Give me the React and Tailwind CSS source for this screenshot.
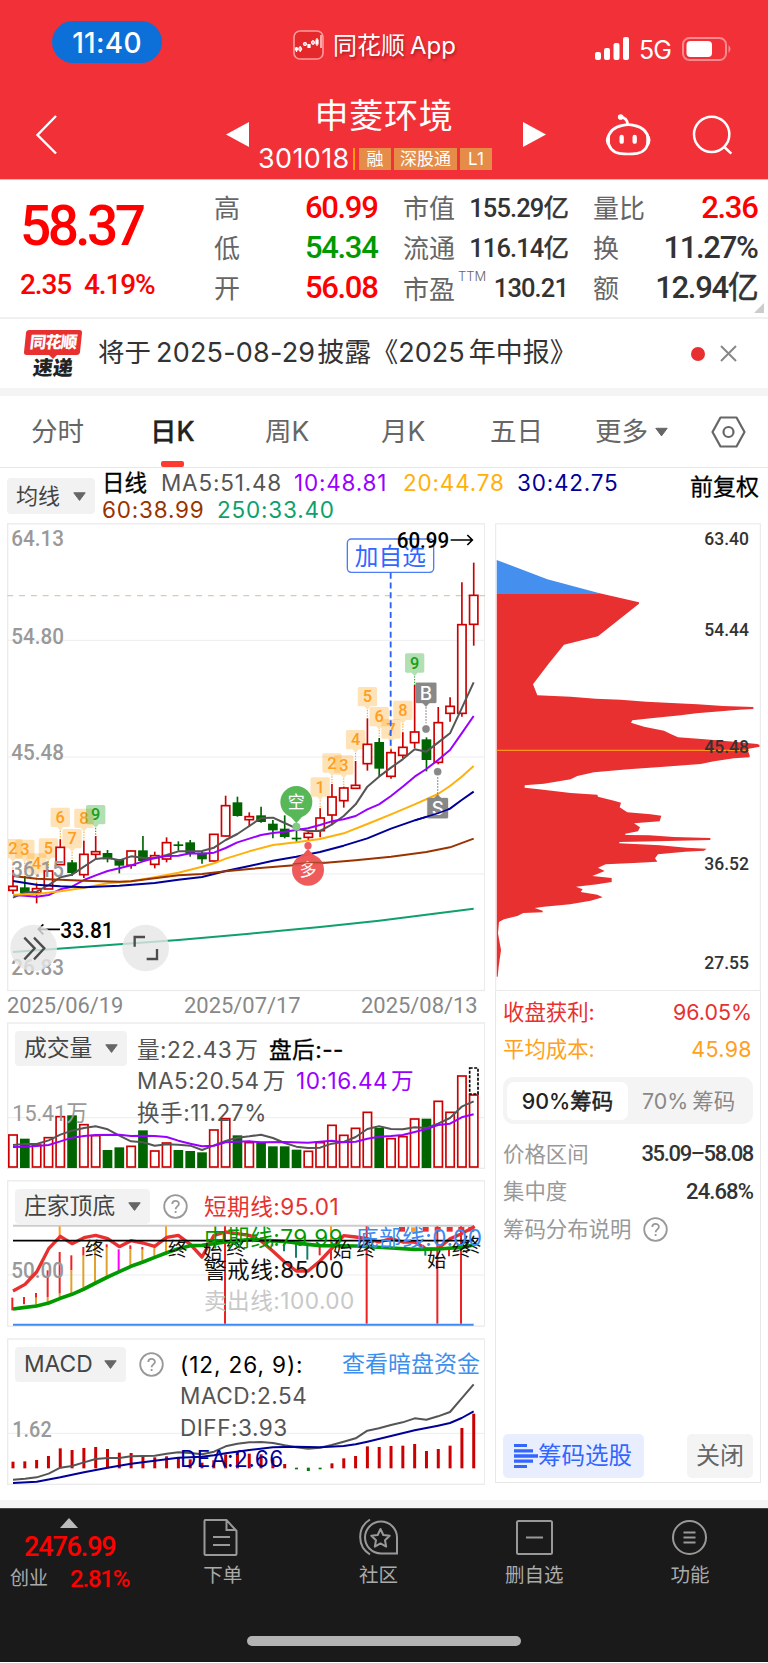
import React from "react";

const STEP = 35.44;
const X = (i) => 39 + STEP * i;
const RED = "#cc0000";
const GREEN = "#006400";

// [high, bodyTop, bodyBottom, low, rising]
const candles = [
  [1050, 1099, 1111, 1122, 1], [1068, 1103, 1118, 1118, 0], [1090, 1106, 1118, 1150, 1], [1053, 1053, 1107, 1107, 1],
  [958, 982, 1034, 1034, 1], [1020, 1028, 1058, 1068, 0], [962, 1003, 1064, 1074, 1], [948, 995, 1003, 1017, 1],
  [990, 1000, 1017, 1027, 0], [1017, 1020, 1036, 1060, 0], [992, 993, 1036, 1046, 1], [948, 992, 1022, 1022, 0],
  [995, 1007, 1033, 1045, 1], [952, 968, 1017, 1027, 1], [964, 974, 977, 992, 0], [960, 968, 999, 1010, 0],
  [995, 999, 1017, 1031, 0], [942, 943, 1023, 1023, 1], [827, 857, 948, 950, 1], [830, 848, 887, 890, 0],
  [877, 890, 899, 921, 1], [860, 887, 905, 908, 0], [900, 912, 930, 955, 0], [886, 927, 950, 955, 0],
  [930, 954, 957, 967, 0], [935, 940, 952, 962, 1], [865, 894, 932, 952, 1], [792, 831, 885, 912, 1],
  [800, 804, 842, 863, 1], [723, 796, 805, 805, 1], [595, 673, 731, 752, 1], [654, 667, 745, 768, 0],
  [688, 698, 769, 776, 1], [637, 682, 706, 715, 1], [495, 636, 668, 685, 1], [652, 659, 719, 754, 0],
  [561, 608, 727, 733, 1], [532, 559, 580, 605, 1], [187, 314, 580, 590, 1], [128, 226, 313, 377, 1],
];

const priceLines = [
  ["#555555", "39,1133 75,1118 110,1115 146,1095 181,1072 216,1064 252,1040 287,1017 323,1013 358,1021 393,1009 429,1013 464,1015 500,1005 535,994 571,994 606,993 642,983 677,960 712,942 748,918 783,894 819,893 854,909 889,925 924,933 960,933 995,914 1031,888 1067,853 1102,800 1137,770 1173,743 1208,718 1244,688 1279,695 1314,668 1350,640 1385,565 1421,487"],
  ["#9900ff", "39,1125 75,1127 110,1130 146,1125 181,1108 216,1100 252,1080 287,1066 323,1053 358,1045 393,1036 429,1024 464,1014 500,1008 535,1007 571,1000 606,1001 642,998 677,984 712,967 748,956 783,945 819,939 854,935 889,930 924,925 960,915 995,904 1031,898 1067,888 1102,868 1137,853 1173,828 1208,800 1244,770 1279,747 1314,720 1350,690 1385,640 1421,588"],
  ["#ffb10a", "39,1124 110,1122 181,1114 252,1103 323,1090 393,1084 464,1072 535,1058 606,1040 642,1030 677,1016 748,994 819,975 889,967 960,957 1031,940 1102,912 1173,883 1244,853 1314,822 1350,798 1385,770 1421,738"],
  ["#000099", "39,1083 110,1094 181,1099 252,1102 358,1097 464,1089 535,1079 606,1071 677,1053 748,1038 819,1022 889,1010 960,996 1031,977 1102,955 1173,926 1244,901 1314,880 1350,866 1385,840 1421,815"],
  ["#993300", "39,1068 110,1076 181,1079 252,1082 358,1085 393,1084 464,1075 535,1066 606,1062 677,1054 748,1047 854,1038 960,1030 1067,1021 1173,1010 1279,996 1350,982 1421,956"],
  ["#0fa06c", "39,1296 358,1273 535,1260 748,1241 960,1221 1137,1202 1314,1180 1421,1166"],
];

// [candle index, label, top of the flag, end of the dotted stem]
const flags = [
  [0, "2", 957, 1050], [1, "3", 959, 1068], [2, "4", 1000, 1090], [3, "5", 955, 1050], [4, "6", 863, 960], [5, "7", 927, 1022],
  [6, "8", 866, 962], [7, "9", 855, 950], [26, "1", 772, 867], [27, "2", 700, 792], [28, "3", 706, 800], [29, "4", 630, 723],
  [30, "5", 501, 595], [31, "6", 561, 654], [32, "7", 598, 688], [33, "8", 542, 637], [34, "9", 400, 495],
];

const volTops = [374, 385, 404, 382, 319, 315, 343, 376, 419, 411, 408, 360, 422, 398, 419, 422, 426, 359, 325, 375, 397, 398, 408, 408, 418, 423, 397, 345, 375, 354, 306, 353, 385, 379, 326, 325, 273, 306, 197, 254];
const volGreen = [1, 5, 8, 9, 11, 14, 15, 16, 19, 21, 22, 23, 24, 31, 35];
const macdTops = [392, 391, 387, 375, 352, 357, 351, 348, 354, 365, 366, 378, 379, 376, 378, 385, 395, 388, 370, 365, 368, 370, 385, 399, 415, 420, 415, 397, 382, 375, 346, 348, 345, 344, 339, 360, 354, 344, 291, 248];

const NUM = "Roboto, 'Noto Sans CJK SC', sans-serif";

function Num({ x, y, w, size = 68, fill = "#999999", weight = 500, children }) {
  return (
    <text x={x} y={y} fontSize={size} fill={fill} fontWeight={weight} fontFamily={NUM} textLength={w} lengthAdjust="spacingAndGlyphs">
      {children}
    </text>
  );
}

function Line({ points, stroke, width = 6 }) {
  return <polyline points={points} fill="none" stroke={stroke} strokeWidth={width} strokeLinejoin="round" />;
}

function Flag({ i, label, top, end }) {
  const x = X(i);
  const green = label === "9";
  const c = green ? "#1a9e1a" : "#ff9d1e";
  return (
    <g>
      <path d={`M${x - 24} ${top}h48q5 0 5 5v48q0 5-5 5h-15l-9 11l-9-11h-15q-5 0-5-5v-48q0-5 5-5z`} fill={green ? "#009900" : "#ff9900"} fillOpacity={green ? 0.3 : 0.28} />
      <line x1={x} x2={x} y1={top + 69} y2={end} stroke={c} strokeWidth="3" strokeDasharray="4 4" />
      <text x={x} y={top + 46} fontSize="49" textAnchor="middle" fill={c} fontWeight="500" fontFamily={NUM}>{label}</text>
    </g>
  );
}

function PriceChart() {
  return (
    <svg className="block h-[499px] w-[478px]" viewBox="21 9 1434 1497">
      <rect x="23" y="11.5" width="1431" height="1400" fill="none" stroke="#ebebeb" strokeWidth="4" />
      {[361, 711, 1062].map((y) => <line key={y} x1="23" x2="1453" y1={y} y2={y} stroke="#ededed" strokeWidth="3" />)}
      <line x1="22" x2="1455" y1="227" y2="227" stroke="#e3c8a4" strokeWidth="4" strokeDasharray="17.7 17.7" />
      <defs><clipPath id="plot"><rect x="24" y="12" width="1431" height="1400" /></clipPath></defs>
      <g clipPath="url(#plot)">
        {flags.map(([i, l, t, e]) => <Flag key={i} i={i} label={l} top={t} end={e} />)}
      </g>
      {candles.map(([h, t, b, l, up], i) => (
        <g key={i}>
          <line x1={X(i)} x2={X(i)} y1={h} y2={up ? t : l} stroke={up ? RED : GREEN} strokeWidth="5" />
          {up ? <line x1={X(i)} x2={X(i)} y1={b} y2={l} stroke={RED} strokeWidth="5" /> : null}
          {up ? (
            <rect x={X(i) - 12.5} y={t} width="25" height={b - t} fill="#fff" stroke={RED} strokeWidth="5" />
          ) : (
            <rect x={X(i) - 14.5} y={t - 1} width="29" height={b - t + 2} fill={GREEN} />
          )}
        </g>
      ))}
      {priceLines.map(([c, p]) => <Line key={c} points={p} stroke={c} />)}
      <Num x="34" y="79" w="158">64.13</Num>
      <Num x="34" y="371" w="158">54.80</Num>
      <Num x="34" y="720" w="158">45.48</Num>
      <Num x="34" y="1070" w="158">36.15</Num>
      <Num x="34" y="1364" w="158">26.83</Num>
      <g>
        <circle cx="889" cy="846" r="48" fill="#58b858" />
        <path d="M872 890h34l-17 20z" fill="#58b858" />
        <circle cx="889" cy="920" r="12" fill="#7fcb7f" />
        <text x="889" y="864" fontSize="51" fill="#fff" textAnchor="middle" fontFamily={NUM}>空</text>
        <circle cx="924" cy="1049" r="48" fill="#ee5454" fillOpacity="0.96" />
        <path d="M907 1006h34l-17-20z" fill="#ee5454" />
        <circle cx="924" cy="977" r="11" fill="#ef5b63" />
        <text x="924" y="1067" fontSize="51" fill="#fff" textAnchor="middle" fontFamily={NUM}>多</text>
        <path d="M878 1032Q924 1026 975 1028" stroke="#a84a2c" strokeWidth="5" fill="none" />
      </g>
      <g stroke="#888888" fill="#888888">
        <line x1="1278" x2="1278" y1="562" y2="610" strokeWidth="4" strokeDasharray="4 5" />
        <circle cx="1278" cy="627" r="11" />
        <circle cx="1313" cy="755" r="11" />
        <line x1="1313" x2="1313" y1="772" y2="822" strokeWidth="4" strokeDasharray="4 5" />
        <rect x="1247" y="488" width="62" height="61" rx="3" />
        <path d="M1268 549h20l-10 11z" />
        <rect x="1282" y="834" width="62" height="61" rx="3" />
        <path d="M1303 834h20l-10-11z" />
      </g>
      <text x="1278" y="539" fontSize="56" fill="#fff" textAnchor="middle" fontWeight="500" fontFamily="Inter, sans-serif">B</text>
      <text x="1313" y="885" fontSize="56" fill="#fff" textAnchor="middle" fontWeight="500" fontFamily="Inter, sans-serif">S</text>
      <polyline points="1244,901 1314,880 1350,866" fill="none" stroke="#000099" strokeWidth="5" />
      <rect x="1042" y="57" width="259" height="100" rx="12" fill="#fff" fillOpacity="0.5" stroke="#4c7df5" strokeWidth="4" />
      <text x="1171" y="135" fontSize="71" fill="#3366ff" textAnchor="middle" fontFamily={NUM}>加自选</text>
      <line x1="1172" x2="1172" y1="158" y2="680" stroke="#2c62f5" strokeWidth="5.5" strokeDasharray="18 11.5" />
      <Num x="1190" y="84" w="158" fill="#000">60.99</Num>
      <path d="M1352 60h64M1402 45l15 15l-15 15" fill="none" stroke="#000" strokeWidth="5" />
      <Num x="181" y="1255" w="160" fill="#000">33.81</Num>
      <path d="M180 1228h-65M130 1213l-15 15l15 15" fill="none" stroke="#000" strokeWidth="5" />
      <circle cx="101" cy="1284" r="70" fill="#e6e6e6" fillOpacity="0.8" />
      <circle cx="437" cy="1284" r="70" fill="#e6e6e6" fillOpacity="0.8" />
      <path d="M73 1253l31 32l-31 33M102 1253l31 32l-31 33M404 1280v-29h31M471 1287v30h-31" fill="none" stroke="#4d4d4d" strokeWidth="7" />
      <Num x="21" y="1480" w="349" weight="400" fill="#888888">2025/06/19</Num>
      <Num x="552" y="1480" w="350" weight="400" fill="#888888">2025/07/17</Num>
      <Num x="1083" y="1480" w="350" weight="400" fill="#888888">2025/08/13</Num>
    </svg>
  );
}

function ChipChart() {
  return (
    <svg className="block h-[468px] w-[266px]" viewBox="33 9 798 1404">
      <path d="M38 120L190 178L347 220H38z" fill="#458fee" />
      <path fill="#e83030" d="M38 220H347L465 247L465 251L342 349L240 374L195 430L147 493L160 526L260 530L335 536L410 539L487 545L562 549L640 553L717 558L808 561V567L765 569L720 573L637 580L590 586L508 594L445 601L441 608L480 620L540 632L560 642L582 652L662 658L750 665L820 672L827 675V680L790 687L797 706V712L750 715L690 724L650 732L540 740L433 748L330 757L280 768L260 778L180 791L122 796V803L165 808L260 819L340 824L342 830L390 842L411 848L407 862L430 877L500 883L532 887L527 904L450 910L468 922L462 934L424 941V945L495 946L570 951L679 954V960L518 964L406 966V970L527 976L608 983L668 986L660 992L603 995L522 1003L513 1015L520 1025L450 1029L365 1033L342 1043L362 1053L325 1068L383 1074V1086L340 1093L276 1100L296 1108L290 1116L340 1124L356 1132L320 1142L258 1153L180 1160L152 1164L176 1172V1177L118 1179L100 1188L60 1198L45 1206L42 1240L51 1290L44 1340L41 1370H38z" />
      <rect x="35" y="11.5" width="794" height="1400" fill="none" stroke="#ebebeb" strokeWidth="3.5" />
      <line x1="38" x2="795" y1="691" y2="691" stroke="#ff9320" strokeWidth="4" />
      {[["63.40", 74], ["54.44", 349], ["45.48", 700], ["36.52", 1050], ["27.55", 1348]].map(([t, y]) => (
        <Num key={t} x="661" y={y} w="134" size="57" fill="#333">{t}</Num>
      ))}
    </svg>
  );
}

function VolumeChart() {
  return (
    <svg className="block h-[147px] w-[478px]" viewBox="21 35 1434 441">
      <rect x="23" y="38" width="1431" height="436" fill="none" stroke="#ebebeb" strokeWidth="4" />
      <line x1="23" x2="1453" y1="322" y2="322" stroke="#ededed" strokeWidth="3" />
      {volTops.map((t, i) => volGreen.includes(i) ? (
        <rect key={i} x={X(i) - 14.5} y={t} width="29" height={473 - t} fill={GREEN} />
      ) : (
        <rect key={i} x={X(i) - 12.5} y={t} width="25" height={470 - t} fill="#fff" stroke={RED} strokeWidth="5" />
      ))}
      <rect x="1409" y="173" width="25" height="78" fill="#fff" stroke="#000" strokeWidth="5" strokeDasharray="9 4.5" />
      <Line stroke="#555555" points="39,404 75,401 110,401 146,390 181,373 216,361 252,353 287,348 323,357 358,376 393,393 429,396 464,406 500,402 535,403 571,406 606,419 642,405 677,392 712,382 748,378 783,373 819,383 854,398 889,409 924,413 960,412 995,400 1031,395 1067,380 1102,356 1137,348 1173,356 1208,357 1244,351 1279,353 1314,340 1350,323 1385,289 1421,273" />
      <Line stroke="#9900ff" points="39,410 75,409 110,407 146,404 181,393 216,382 252,377 287,374 358,373 393,377 429,376 464,377 500,380 535,391 571,400 606,408 642,406 677,396 748,393 783,396 854,395 924,397 960,394 995,391 1031,396 1067,394 1102,385 1137,379 1173,377 1208,374 1244,365 1279,356 1314,344 1350,340 1385,321 1421,312" />
      <Num x="37" y="331" w="226" size="68" weight="400" fill="#999">15.41万</Num>
    </svg>
  );
}

const stems = [
  ["#e22", 37, 382, 420], ["#e22", 72, 380, 402], ["#e22", 108, 368, 382], ["#dfa32d", 108, 382, 405], ["#e22", 143, 300, 380], ["#dfa32d", 143, 380, 396],
  ["#e22", 179, 245, 370], ["#dfa32d", 179, 370, 382], ["#e22", 214, 255, 300], ["#dfa32d", 214, 300, 370], ["#e22", 250, 230, 256], ["#dfa32d", 250, 256, 352],
  ["#dfa32d", 285, 218, 337], ["#e22", 320, 222, 232], ["#dfa32d", 320, 232, 316], ["#f0f", 356, 237, 303], ["#e22", 391, 225, 237], ["#dfa32d", 391, 237, 288],
  ["#e22", 427, 230, 238], ["#dfa32d", 427, 238, 275], ["#dfa32d", 463, 232, 260], ["#ff9d1e", 179, 168, 198], ["#ff9d1e", 498, 168, 245], ["#ff9d1e", 993, 168, 225],
  ["#17806a", 817, 213, 228], ["#17806a", 852, 220, 243], ["#17806a", 888, 220, 262], ["#17806a", 922, 220, 268], ["#17806a", 1276, 235, 256], ["#e22", 959, 228, 255], ["#e22", 993, 232, 270], ["#e22", 1347, 232, 258],
  ["#e22", 675, 168, 460], ["#e22", 1100, 168, 460], ["#e22", 1312, 168, 460], ["#e22", 1383, 168, 460],
];

function TopBottomChart() {
  return (
    <svg className="block h-[147px] w-[478px]" viewBox="21 29 1434 441">
      <rect x="23" y="31.5" width="1431" height="436" fill="none" stroke="#ebebeb" strokeWidth="4" />
      <line x1="23" x2="1453" y1="314" y2="314" stroke="#ededed" strokeWidth="3" />
      <line x1="39" x2="1421" y1="166" y2="166" stroke="#cccccc" strokeWidth="6" />
      {stems.map(([c, x, a, b], i) => <line key={i} x1={x} x2={x} y1={a} y2={b} stroke={c} strokeWidth="6" />)}
      <Num x="34" y="324" w="158">50.00</Num>
      {[1197, 1268, 1304, 1340, 1375, 1405].map((x) => <rect key={x} x={x} y="170" width="18" height="14" fill="#e83030" />)}
      <line x1="1233" x2="1252" y1="178" y2="178" stroke="#ff9d1e" strokeWidth="14" />
      <Line stroke="#e83030" width={10} points="39,362 75,342 110,305 146,235 181,198 216,220 252,202 287,195 323,205 358,229 393,211 429,218 464,228 500,201 535,195 571,222 606,260 642,195 677,185 712,190 748,195 783,212 819,243 854,275 889,302 924,302 960,272 995,235 1031,196 1067,200 1102,205 1137,215 1173,205 1208,215 1244,215 1279,236 1314,235 1350,205 1385,190 1424,168" />
      <Line stroke="#009a00" width={11} points="39,416 75,411 110,407 146,398 181,384 216,372 252,356 287,338 323,320 358,304 393,288 429,275 464,261 500,247 535,235 571,226 606,225 677,215 748,208 854,213 924,222 960,226 1067,227 1173,233 1244,237 1314,236 1385,231 1421,224" />
      <line x1="39" x2="1421" y1="211" y2="211" stroke="#000" strokeWidth="5" />
      <line x1="39" x2="1421" y1="463" y2="463" stroke="#3d8bf0" strokeWidth="6" />
      {[["终", 284, 258], ["终", 533, 258], ["始", 638, 266], ["终", 708, 255], ["始", 1027, 259], ["终", 1098, 258], ["始", 1310, 289], ["终", 1384, 258], ["终", 1414, 245]].map(([t, x, y]) => (
        <text key={x} x={x} y={y} fontSize="58" fill="#111" textAnchor="middle" fontFamily={NUM}>{t}</text>
      ))}
    </svg>
  );
}

function MacdChart() {
  return (
    <svg className="block h-[147px] w-[478px]" viewBox="21 21 1434 441">
      <rect x="23" y="24" width="1431" height="436" fill="none" stroke="#ebebeb" strokeWidth="4" />
      <line x1="23" x2="1453" y1="307" y2="307" stroke="#ededed" strokeWidth="3" />
      <Num x="37" y="317" w="118">1.62</Num>
      {macdTops.map((t, i) => (
        <line key={i} x1={X(i)} x2={X(i)} y1={t > 412 ? 410 : 412} y2={t} stroke={t > 412 ? "#087808" : RED} strokeWidth="9" />
      ))}
      <Line stroke="#555555" points="39,446 75,443 110,439 146,428 181,410 216,405 252,394 287,384 323,381 358,381 393,376 464,374 500,368 535,364 571,366 606,370 642,362 677,346 712,338 748,334 783,333 819,336 854,343 889,349 924,353 960,350 995,342 1031,332 1067,322 1102,299 1137,292 1173,282 1208,274 1244,262 1279,266 1314,256 1350,243 1385,202 1421,160" />
      <Line stroke="#000099" width={6} points="39,456 110,452 181,439 252,424 323,410 393,398 464,389 535,380 606,377 642,373 677,367 748,357 819,349 889,347 960,349 1031,345 1067,340 1102,332 1173,315 1244,298 1314,284 1350,276 1385,261 1421,241" />
    </svg>
  );
}

function Caret({ className = "" }) {
  return (
    <svg className={"h-[9px] w-[13px] shrink-0 " + className} viewBox="0 0 13 9">
      <path d="M.8.8h11.4L6.5 8.4z" fill="#666" stroke="#666" strokeLinejoin="round" />
    </svg>
  );
}

function Picker({ className, children }) {
  return (
    <button className={"flex h-[35px] shrink-0 items-center justify-between rounded-[4px] bg-[#f2f2f2] pr-[9px] pl-[9px] text-[22.8px] text-[#444] " + className}>
      <span className="flex">{children}</span>
      <Caret />
    </button>
  );
}

function Help() {
  return (
    <svg className="size-[25px] shrink-0" viewBox="0 0 25 25" fill="none" stroke="#999" strokeWidth="1.8">
      <circle cx="12.5" cy="12.5" r="11.3" />
      <path d="M9.3 10.1c0-4.3 6.6-4.2 6.6-.2 0 2.3-3.3 2.6-3.3 5.3M12.6 17v2" />
    </svg>
  );
}

function Logo() {
  return (
    <div className="flex w-[58px] flex-col items-center">
      <div className="flex h-[25px] w-[56px] -skew-x-6 items-center justify-center rounded-[3px] bg-[#e83030] text-[16.5px] leading-none font-black tracking-[-1px] text-white">同花顺</div>
      <div className="h-0 w-0 border-x-[4px] border-t-[4px] border-x-transparent border-t-[#e83030]" />
      <div className="-mt-[1px] -skew-x-6 text-[20px] leading-[20px] font-black text-[#222]">速递</div>
    </div>
  );
}

function Header() {
  return (
    <header className="h-[180px] border-b border-[#f9b3b0] bg-[#f23038] text-white">
      <div className="flex h-[84px] items-start">
        <div className="mt-[21px] ml-[52px] flex h-[42px] w-[110px] items-center justify-center rounded-full bg-[#0d70d8] pt-[2px] text-[28px] font-medium tracking-[0.300px]">11:40</div>
        <svg className="mt-[30px] ml-[131px] h-[30px] w-[31px]" viewBox="0 0 31 30" fill="none">
          <rect x="1" y="1" width="29" height="28" rx="6" fill="#e5282c" stroke="#ff9c9c" strokeWidth="1.6" />
          <g stroke="#fff" strokeWidth="1.2">
            <path d="M3.5 17v5M7.2 16v6M12 12v4M16 14v4M20 10v5M24 8v8M28 5v13" />
            <path d="M2.5 18h2v2h-2zM15 14.5h2v3h-2z" fill="#fff" />
            <circle cx="7.2" cy="19" r="1.5" /><circle cx="12" cy="14" r="1.5" /><circle cx="20" cy="12.5" r="1.5" />
            <path d="M23 10h2v4h-2z" fill="#fff" />
          </g>
        </svg>
        <div className="mt-[28px] ml-[9px] flex h-[36px] w-[124px] items-center gap-[5px] whitespace-nowrap [text-shadow:1px_2px_3px_rgba(90,0,0,0.45)]">
          <span className="text-[24px]">同花顺</span><span className="text-[24px]">App</span>
        </div>
        <svg className="mt-[37px] ml-[138px] h-[23px] w-[35px]" viewBox="0 0 35 23" fill="#fff">
          <rect x="0" y="15" width="6" height="8" rx="2" /><rect x="9" y="11" width="6" height="12" rx="2" /><rect x="18.5" y="6" width="6" height="17" rx="2" /><rect x="28" y="0" width="6" height="23" rx="2" />
        </svg>
        <div className="mt-[34px] ml-[9px] h-[32px] w-[34px] text-[25px] leading-[32px] tracking-[-1px]">5G</div>
        <svg className="mt-[37px] ml-[9px] h-[24px] w-[50px]" viewBox="0 0 50 24">
          <rect x="1" y="1" width="43" height="22" rx="6.5" fill="none" stroke="#f88a90" strokeWidth="2" />
          <rect x="4.500" y="4" width="25.500" height="16" rx="4" fill="#fff" />
          <path d="M46.500 8q4 4 0 8z" fill="#f88a90" />
        </svg>
      </div>
      <div className="flex h-[95px] items-start">
        <svg className="mt-[31px] ml-[35px] h-[40px] w-[24px]" viewBox="0 0 24 40"><path d="M21 1L2.500 20L21 38.500" fill="none" stroke="#fff" strokeWidth="2.4" /></svg>
        <svg className="mt-[38px] ml-[167px] h-[25px] w-[23px]" viewBox="0 0 23 25"><path d="M23 0v25L0 12.500z" fill="#fff" /></svg>
        <div className="ml-[9px] flex w-[234px] flex-col items-center">
          <div className="mt-[9px] pl-[18px] text-[34px] leading-[46px] tracking-[0.800px]">申菱环境</div>
          <div className="mt-[7px] flex w-full items-center">
            <span className="w-[95px] text-[27px] leading-[26px] tracking-[0.350px]">301018</span>
            <span className="h-[22px] w-[2px] bg-[#ffa000]" />
            <div className="ml-[4px] flex gap-[3px] text-[17px] leading-[22px]">
              <span className="w-[32px] bg-[#e58c49] text-center">融</span>
              <span className="w-[63px] bg-[#e58c49] text-center">深股通</span>
              <span className="w-[32px] bg-[#e58c49] text-center">L1</span>
            </div>
          </div>
        </div>
        <svg className="mt-[38px] ml-[31px] h-[25px] w-[23px]" viewBox="0 0 23 25"><path d="M0 0v25L23 12.500z" fill="#fff" /></svg>
        <svg className="mt-[30px] ml-[59px] h-[43px] w-[48px]" viewBox="45 282 144 129" fill="none" stroke="#fff" strokeWidth="8">
          <circle cx="92" cy="291" r="8.500" fill="#fff" stroke="none" />
          <path d="M92 292Q111 292 113 313" />
          <path d="M98 316Q115 312 132 316Q172 324 175 358Q174 394 142 400Q115 404 88 400Q56 394 54 358Q57 324 98 316z" />
          <path d="M58 341Q41 361 58 380zM171 341Q188 361 171 380z" fill="#fff" strokeWidth="4" />
          <path d="M95 351v14M134 351v14" strokeWidth="13" strokeLinecap="round" />
        </svg>
        <svg className="mt-[31px] ml-[39px] h-[42px] w-[42px]" viewBox="306 285 126 126" fill="none" stroke="#fff" strokeWidth="7.500">
          <circle cx="365" cy="343" r="53" /><path d="M403 381L424 401" />
        </svg>
      </div>
    </header>
  );
}

function Yi() {
  return <span className="font-normal [-webkit-text-stroke:0.5px_currentColor]">亿</span>;
}

function Quote() {
  const din = "font-[Roboto,'Noto_Sans_CJK_SC',sans-serif] font-medium";
  const big = din + " mr-[-0.500px] text-[31px] tracking-[-1.300px] ";
  const small = din + " text-[25.500px] tracking-[-0.900px] text-[#333]";
  const row = "flex h-[40px] items-center justify-between whitespace-nowrap";
  return (
    <section className="relative flex h-[139px] border-b-2 border-[#f0f0f0] pt-[8px] text-[26px] text-[#666]">
      <div className={"w-[214px] pl-[20px] text-[#f00] " + din}>
        <div className="mt-[5px] h-[66px] text-[55px] leading-[66px] tracking-[-3.600px]">58.37</div>
        <div className="mt-[10px] flex h-[32px] text-[28px] leading-[32px] tracking-[-1.100px]"><span className="w-[64px]">2.35</span><span>4.19%</span></div>
      </div>
      <div className="w-[163px]">
        <div className={row}><span>高</span><b className={big + "text-[#f00]"}>60.99</b></div>
        <div className={row}><span>低</span><b className={big + "text-[#009a00]"}>54.34</b></div>
        <div className={row}><span>开</span><b className={big + "text-[#f00]"}>56.08</b></div>
      </div>
      <div className="ml-[26px] w-[165px]">
        <div className={row}><span>市值</span><b className={small}>155.29<Yi /></b></div>
        <div className={row}><span>流通</span><b className={small}>116.14<Yi /></b></div>
        <div className={row}><span className="flex pt-[3px]">市盈<sup className="top-[2px] ml-[3px] text-[13px] leading-[8px] font-light">TTM</sup></span><b className={small}>130.21</b></div>
      </div>
      <div className="ml-[25px] w-[164px]">
        <div className={row}><span>量比</span><b className={big + "text-[#f00]"}>2.36</b></div>
        <div className={row}><span>换</span><b className={big + "text-[#333]"}>11.27%</b></div>
        <div className={row}><span>额</span><b className={big + "text-[#333]"}>12.94<Yi /></b></div>
      </div>
      <svg className="absolute right-[4px] bottom-[4px] size-[10px]" viewBox="0 0 10 10"><path d="M10 0v10H0z" fill="#ccc" /></svg>
    </section>
  );
}

function Tabs() {
  return (
    <nav className="relative flex h-[72px] items-center border-b border-[#e8e8e8] pt-[1px] text-[26.500px] whitespace-nowrap text-[#666]">
      <span className="ml-[31px] w-[119px]">分时</span>
      <span className="w-[115px] font-medium text-[#222] [-webkit-text-stroke:0.300px_currentColor]">日K</span>
      <span className="w-[116px]">周K</span>
      <span className="w-[109px]">月K</span>
      <span className="w-[105px]">五日</span>
      <span>更多</span>
      <Caret className="ml-[7px] h-[10px]" />
      <svg className="ml-[43px] h-[32px] w-[35px]" viewBox="0 0 35 32" fill="none" stroke="#666" strokeWidth="2.200">
        <path d="M9.500 1.500h16L33.500 16l-8 14.500h-16L1.500 16z" strokeLinejoin="round" /><circle cx="17.500" cy="16" r="5" />
      </svg>
      <i className="absolute bottom-0 left-[161px] h-[6px] w-[23px] rounded-[2px] bg-[#ff3b30]" />
    </nav>
  );
}

function Legend() {
  return (
    <div className="flex h-[55px] items-start text-[22.500px] leading-[27px] whitespace-nowrap">
      <Picker className="mt-[10px] ml-[7px] h-[36px] w-[88px] text-[22px]">均线</Picker>
      <div className="ml-[7px] w-[588px] pt-[1px] tracking-[0.800px]">
        <div className="flex">
          <span className="w-[59px] tracking-normal text-black [-webkit-text-stroke:0.300px_currentColor]">日线</span>
          <span className="w-[133px] text-[#555]">MA5:51.48</span>
          <span className="w-[109px] text-[#9900ff]">10:48.81</span>
          <span className="w-[114px] text-[#ffb10a]">20:44.78</span>
          <span className="text-[#000099]">30:42.75</span>
        </div>
        <div className="flex">
          <span className="w-[115px] text-[#993300]">60:38.99</span>
          <span className="text-[#0fa06c]">250:33.40</span>
        </div>
      </div>
      <span className="mt-[6px] text-[23px] text-black [-webkit-text-stroke:0.300px_currentColor]">前复权</span>
    </div>
  );
}

const stack = "[grid-area:1/1]";
const rows = "flex flex-col whitespace-nowrap leading-[31.3px] text-[22.6px] tracking-[0.500px]";

function Charts() {
  return (
    <div className="ml-[7px] flex w-[478px] flex-col">
      <PriceChart />
      <div className="grid">
        <div className={stack}><VolumeChart /></div>
        <div className={stack + " flex items-start pt-[9px] pl-[8px]"}>
          <Picker className="w-[112px]">成交量</Picker>
          <div className={rows + " ml-[10px] pt-[3px] text-[#555]"}>
            <div className="flex"><span className="w-[132px]">量:22.43<span className="ml-[3px]">万</span></span><span className="text-black [-webkit-text-stroke:0.300px_currentColor]">盘后:--</span></div>
            <div className="flex"><span className="w-[159px]">MA5:20.54<span className="ml-[3px]">万</span></span><span className="text-[#9900ff]">10:16.44<span className="ml-[3px]">万</span></span></div>
            <div>换手:11.27%</div>
          </div>
        </div>
      </div>
      <div className="mt-[11px] grid">
        <div className={stack}><TopBottomChart /></div>
        <div className={stack + " flex items-start pt-[9px] pl-[8px]"}>
          <Picker className="w-[135px]">庄家顶底</Picker>
          <div className="ml-[13px] pt-[5px]"><Help /></div>
          <div className={rows + " ml-[16px] pt-[2px]"}>
            <div className="text-[#e83030]">短期线:95.01</div>
            <div className="flex"><span className="w-[152px] text-[#009a00]">中期线:79.99</span><span className="text-[#3d8bf0]">底部线:0.00</span></div>
            <div className="text-[#111]">警戒线:85.00</div>
            <div className="text-[#c8c8c8]">卖出线:100.00</div>
          </div>
        </div>
      </div>
      <div className="mt-[11px] grid">
        <div className={stack}><MacdChart /></div>
        <div className={stack + " flex items-start pt-[9px] pl-[8px]"}>
          <Picker className="w-[111px]">MACD</Picker>
          <div className="ml-[13px] pt-[5px]"><Help /></div>
          <div className={rows + " ml-[16px] w-[162px] pt-[2px] text-[#555]"}>
            <div className="tracking-[0.900px] text-black">(12, 26, 9):</div>
            <div>MACD:2.54</div>
            <div>DIFF:3.93</div>
            <div className="text-[#000099]">DEA:2.66</div>
          </div>
          <a className="pt-[2px] text-[23px] leading-[31px] whitespace-nowrap text-[#3d8fee]">查看暗盘资金</a>
        </div>
      </div>
    </div>
  );
}

function Chips() {
  const row = "flex h-[37.5px] items-center justify-between";
  const din = "font-[Roboto,sans-serif] text-[22px] font-medium text-[#333] ";
  return (
    <aside className="ml-[10px] flex h-[960px] w-[266px] flex-col">
      <ChipChart />
      <div className="flex h-[492px] flex-col border-x border-b border-[#e8e8e8] px-[7px] pt-[2px] text-[21.400px] text-[#999]">
        <div className={row + " text-[#e83030]"}><span>收盘获利:</span><span className="mr-[1px]">96.05%</span></div>
        <div className={row + " text-[#ffa01e]"}><span>平均成本:</span><span className="mr-[1px] tracking-[0.400px]">45.98</span></div>
        <div className="mt-[9px] flex h-[47px] rounded-[10px] bg-[#f4f4f4] p-[4px] pt-[5px]">
          <span className="flex w-[121px] items-center justify-center rounded-[7px] bg-white font-medium text-[#222]">90%<span className="font-normal [-webkit-text-stroke:0.500px_currentColor]">筹码</span></span>
          <span className="flex flex-1 items-center justify-center gap-[4px] text-[#888]"><i className="not-italic">70%</i>筹码</span>
        </div>
        <div className={row + " mt-[11px]"}><span>价格区间</span><span className={din + "tracking-[-1.350px]"}>35.09–58.08</span></div>
        <div className={row}><span>集中度</span><span className={din + "tracking-[-0.900px]"}>24.68%</span></div>
        <div className="flex h-[38px] items-center gap-[12px]"><span>筹码分布说明</span><Help /></div>
        <div className="mt-auto mb-[4px] flex h-[44px] justify-between">
          <button className="flex w-[141px] items-center rounded-[5px] bg-[#e9eeff] pl-[11px] text-[23.500px] text-[#3366ff]">
            <svg className="h-[24px] w-[24px]" viewBox="0 0 24 24" fill="#3366ff"><path d="M0 0h13v3H0zM0 5.200h19v3.300H0zM0 10.300h24v3.400H0zM0 15.500h19v3.300H0zM0 21h13v3H0z" /></svg>
            筹码选股
          </button>
          <button className="w-[66px] rounded-[5px] bg-[#f4f4f4] text-[24px] text-[#666]">关闭</button>
        </div>
      </div>
    </aside>
  );
}

function Item({ icon, children }) {
  return (
    <div className="flex w-[156px] flex-col items-center">
      <svg className="mt-[8px] h-[40px] w-[42px]" viewBox="0 0 42 40" fill="none" stroke="#999" strokeWidth="2">{icon}</svg>
      <span className="mt-[2px] text-[19.500px] leading-[32px] text-[#aaa]">{children}</span>
    </div>
  );
}

function Footer() {
  return (
    <footer className="flex h-[154px] flex-col items-center border-t border-[#444] bg-[#1a1a1a]">
      <div className="flex h-[127px] w-full">
        <div className="flex w-[145px] flex-col font-[Roboto,'Noto_Sans_CJK_SC',sans-serif] font-medium text-[#f00]">
          <svg className="mt-[9px] ml-[60px] h-[10px] w-[18px]" viewBox="0 0 18 10"><path d="M0 10L9 0l9 10z" fill="#bbb" /></svg>
          <span className="mt-[3px] ml-[24px] text-[27px] leading-[32px] tracking-[-1.150px]">2476.99</span>
          <div className="mt-[2px] flex pl-[10px] leading-[28px]"><span className="w-[60px] text-[19px] font-normal text-[#aaa]">创业</span><span className="text-[24px] tracking-[-1.200px]">2.81%</span></div>
        </div>
        <Item icon={<><path d="M2.500 3h22l10 11v23q0 1-1 1h-30q-1 0-1-1V4q0-1 1-1zM24.500 3v10h10M11 20h17M11 28h17" /></>}>下单</Item>
        <Item icon={<><path d="M23 4.500a16 16 0 0 0 0 32h16V20.500A16 16 0 0 0 23 4.500z" /><path d="M12 2.500a20.500 20.500 0 0 0 0 35" /><path d="M22.500 12l2.800 6 6.400.8-4.700 4.400 1.200 6.400-5.700-3.200-5.700 3.200 1.200-6.400-4.700-4.400 6.400-.8z" strokeLinejoin="round" /></>}>社区</Item>
        <Item icon={<><rect x="4" y="4" width="35" height="33" rx="1.500" /><path d="M13 20.500h17" /></>}>删自选</Item>
        <Item icon={<><circle cx="20.500" cy="20.500" r="16.500" /><path d="M14.500 15.500h12M14.500 20.500h12M14.500 25.500h12" /></>}>功能</Item>
      </div>
      <div className="h-[10px] w-[274px] rounded-full bg-[#b3b3b3]" />
    </footer>
  );
}

export default function App() {
  return (
    <div className="flex h-[1663px] w-[768px] flex-col overflow-hidden bg-white font-[Inter,'Noto_Sans_CJK_SC',sans-serif]">
      <Header />
      <Quote />
      <div className="flex h-[69px] shrink-0 items-center pl-[24px] text-[27px] whitespace-nowrap text-[#333]">
        <Logo />
        <div className="ml-[16px] flex w-[591px] pb-[1px]"><span className="text-[26.500px]">将于</span><span className="ml-[5px] tracking-[0.200px]">2025-08-29</span><span className="ml-[2px]">披露《2025<span className="ml-[4px]">年中报》</span></span></div>
        <i className="ml-[2px] size-[14px] rounded-full bg-[#e83030]" />
        <svg className="ml-[15px] size-[17px]" viewBox="0 0 17 17"><path d="M1 1l15 15M16 1L1 16" stroke="#888" strokeWidth="2" /></svg>
      </div>
      <div className="h-[8px] shrink-0 bg-[#f4f4f4]" />
      <Tabs />
      <Legend />
      <div className="flex h-[977px] shrink-0">
        <Charts />
        <Chips />
      </div>
      <div className="h-[8px] shrink-0 bg-[#f4f4f4]" />
      <Footer />
    </div>
  );
}
